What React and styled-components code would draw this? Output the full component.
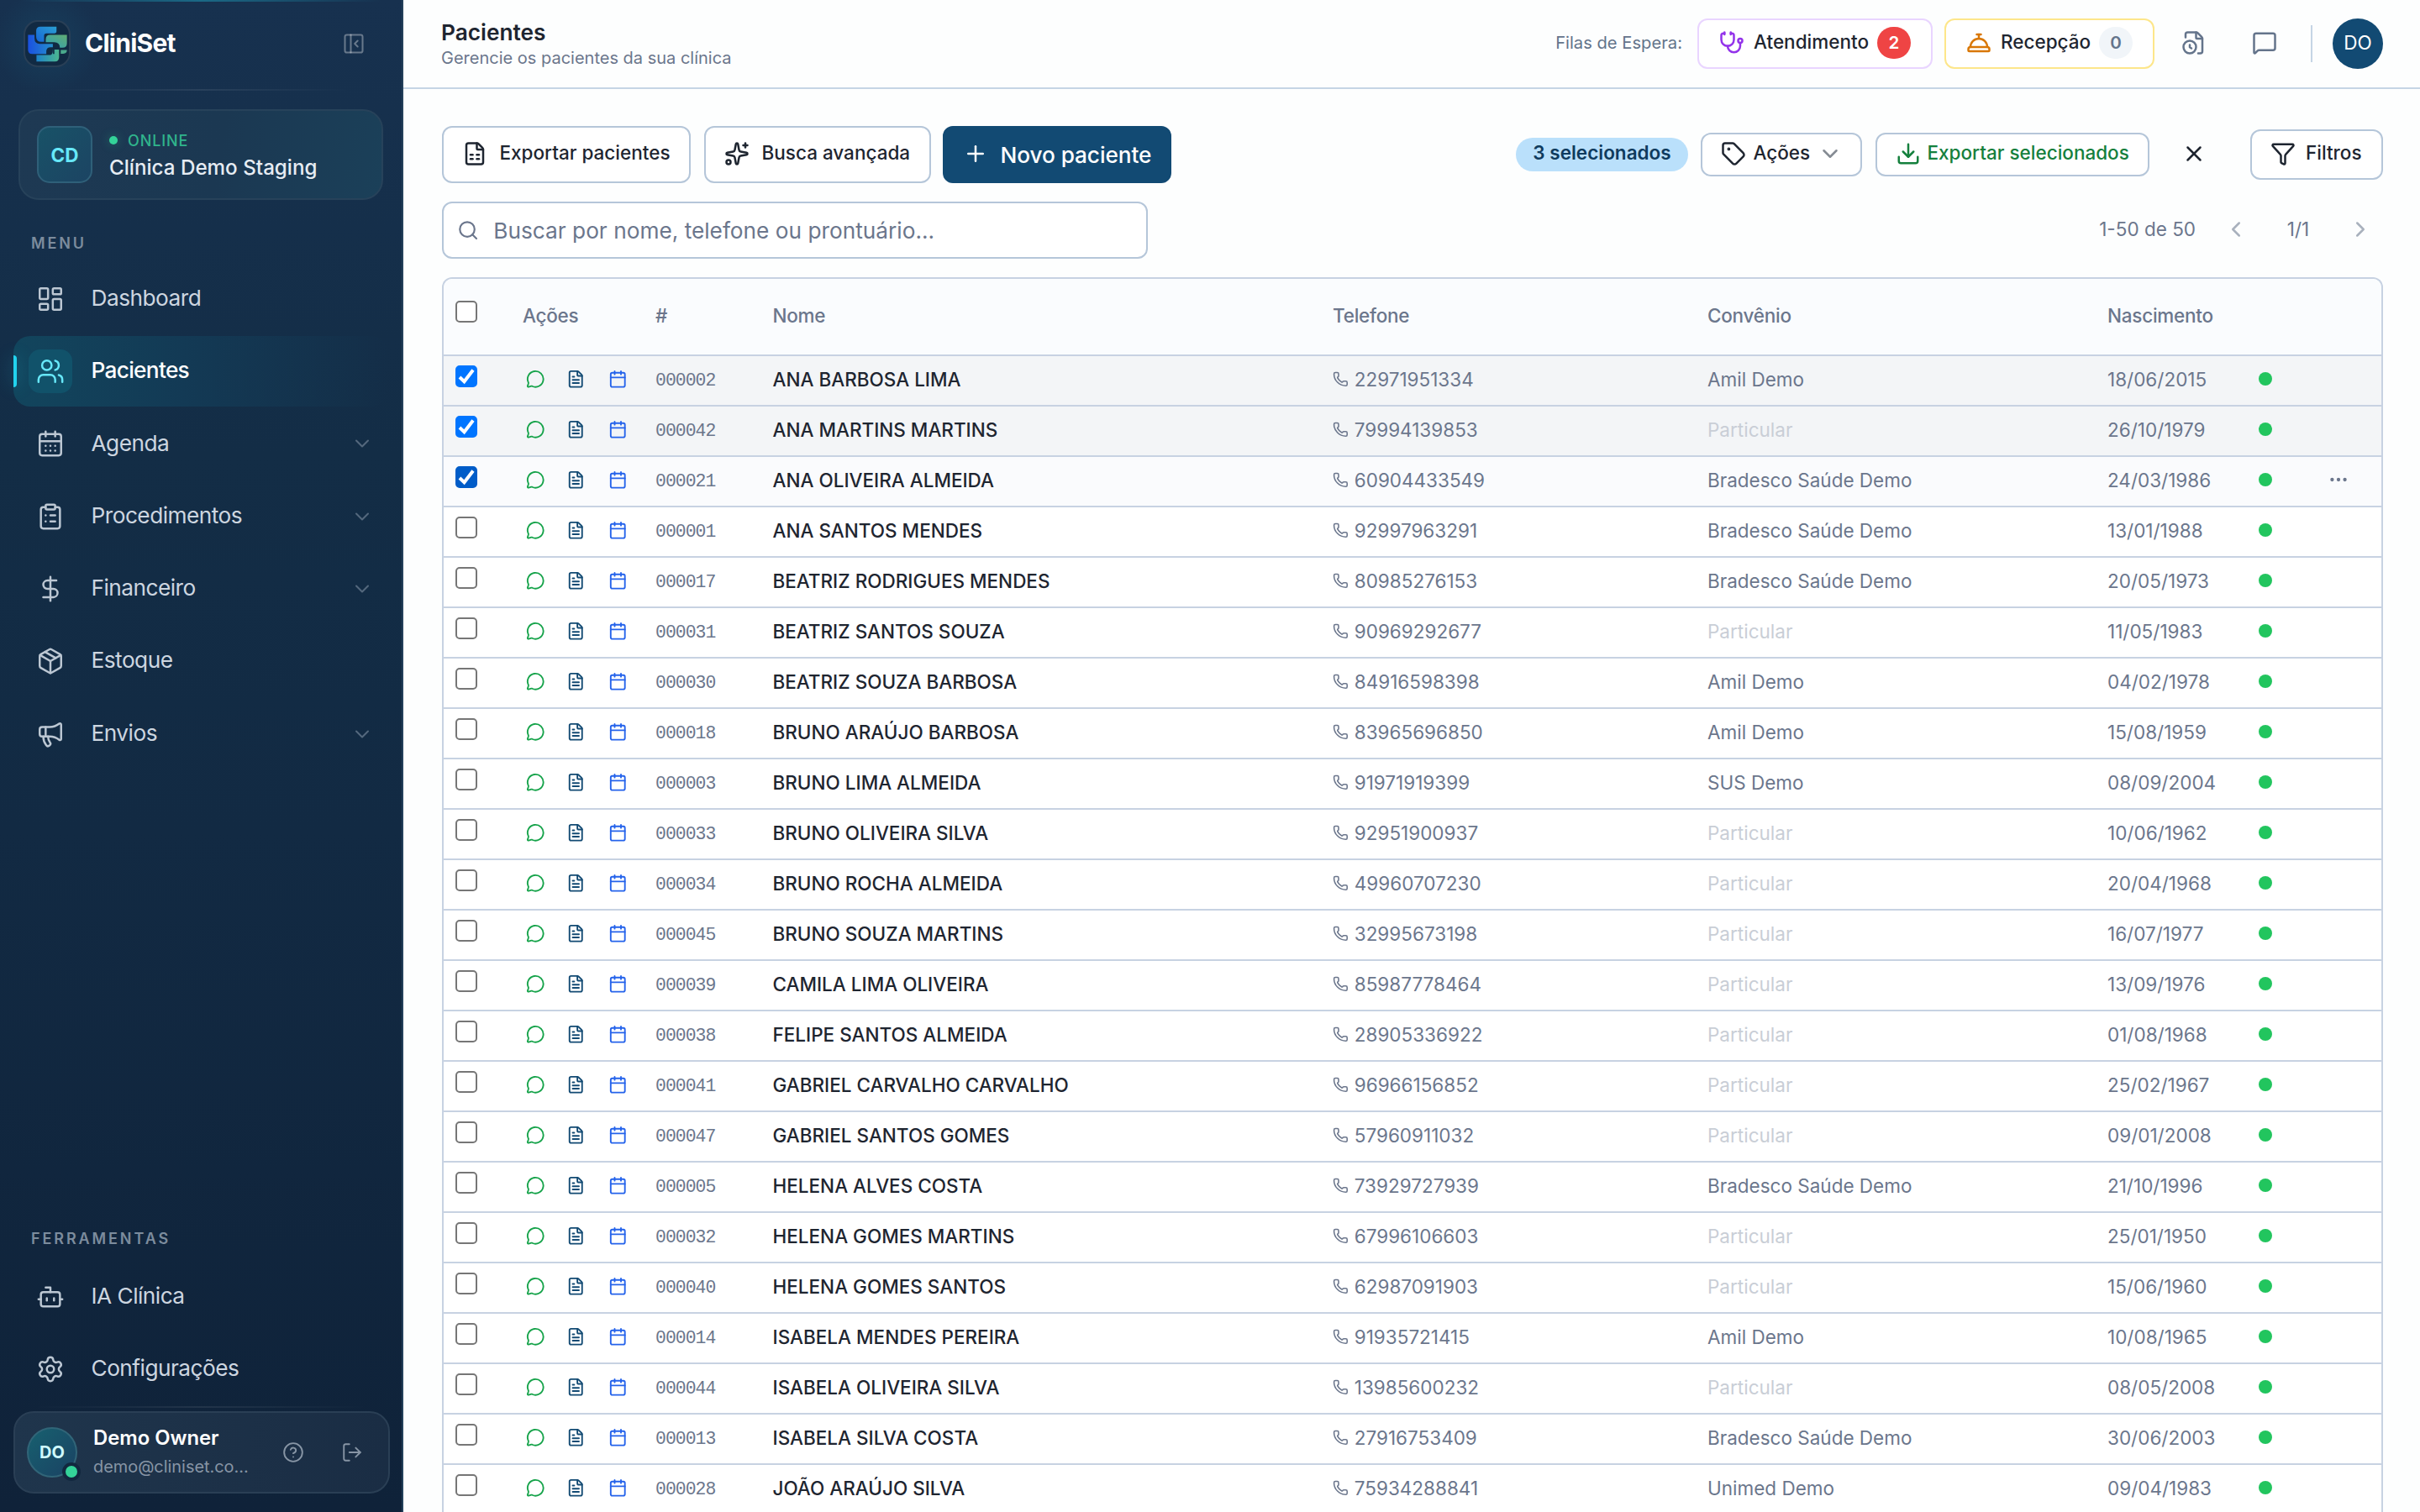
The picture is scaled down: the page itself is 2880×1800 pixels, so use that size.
import React from 'react';
import styled, { createGlobalStyle, css } from 'styled-components';
import {
  Bot,
  Calendar,
  CalendarDays,
  ChevronDown,
  ChevronLeft,
  ChevronRight,
  CircleQuestionMark,
  ClipboardList,
  ConciergeBell,
  DollarSign,
  Download,
  Ellipsis,
  FileClock,
  FileSpreadsheet,
  FileText,
  Funnel,
  LayoutDashboard,
  LogOut,
  Megaphone,
  MessageCircle,
  MessageSquare,
  Package,
  PanelLeftClose,
  Phone,
  Plus,
  Search,
  Settings,
  Sparkles,
  Stethoscope,
  Tag,
  Users,
  X,
} from 'lucide-react';

const GlobalStyle = createGlobalStyle`
  * {
    box-sizing: border-box;
  }

  body {
    margin: 0;
    overflow: hidden;
    font-family: Inter, "Liberation Sans", sans-serif;
    font-size: 22.5px;
    color: #1e2530;
    background-color: #fdfefe;
  }

  svg {
    flex-shrink: 0;
  }
`;

const Page = styled.div`
  display: flex;
  width: 2880px;
  height: 1800px;
  overflow: hidden;
`;

/* Sidebar */

const Sidebar = styled.aside`
  display: flex;
  flex-direction: column;
  flex-shrink: 0;
  width: 480px;
  height: 100%;
  background:
    linear-gradient(90deg, transparent 5%, rgba(34, 211, 238, 0.35) 50%, transparent 95%) top / 100% 2px no-repeat,
    radial-gradient(circle at 56px 50px, rgba(22, 90, 120, 0.32), transparent 62px),
    linear-gradient(180deg, #17314f 0%, #132d46 30%, #122a43 55%, #0f2239 100%);
  border-right: 2px solid #24405a;
`;

const Brand = styled.div`
  display: flex;
  align-items: center;
  height: 106px;
  padding: 0 43px 2px 28px;
`;

const LogoBox = styled.div`
  display: flex;
  align-items: center;
  justify-content: center;
  width: 56px;
  height: 56px;
  margin-right: 17px;
  background-color: #112a43;
  border: 2px solid rgba(255, 255, 255, 0.1);
  border-radius: 17px;
`;

const BrandName = styled.div`
  flex: 1;
  padding-bottom: 3px;
  font-size: 30px;
  font-weight: 700;
  letter-spacing: -0.75px;
  color: #ffffff;
`;

const Fade = styled.div`
  height: 2px;
  margin: ${props => props.$top || 0}px ${props => props.$inset}px 0;
  background: linear-gradient(90deg, transparent, rgba(255, 255, 255, 0.08), transparent);
`;

const ClinicCard = styled.div`
  display: flex;
  align-items: center;
  gap: 20px;
  height: 108px;
  margin: 22px 22px 0;
  padding: 0 20px;
  background: linear-gradient(100deg, #1e3953 0%, #1b3852 55%, #1b4059 100%);
  border: 2px solid #27425a;
  border-radius: 24px;
`;

const ClinicBadge = styled.div`
  display: flex;
  align-items: center;
  justify-content: center;
  width: 66px;
  height: 68px;
  background: linear-gradient(135deg, #185267, #1c4463);
  border: 2px solid #2f6079;
  border-radius: 15px;
  font-weight: 700;
  color: #67e8f9;
`;

const ClinicText = styled.div`
  padding-top: 6px;
`;

const Online = styled.div`
  display: flex;
  align-items: center;
  gap: 12px;
  margin-bottom: 3px;
  font-size: 18px;
  font-weight: 500;
  line-height: 22px;
  letter-spacing: 0.9px;
  color: #30b48c;
`;

const OnlineDot = styled.span`
  width: 10px;
  height: 10px;
  margin-top: -1px;
  border-radius: 50%;
  background-color: #34d399;
  box-shadow: 0 0 12px rgba(52, 211, 153, 0.35);
`;

const ClinicName = styled.div`
  font-size: 24.2px;
  font-weight: 500;
  line-height: 36px;
  color: #e6ecf3;
`;

const SectionLabel = styled.div`
  padding-left: 37px;
  font-size: 18px;
  font-weight: 600;
  line-height: 22px;
  letter-spacing: 2.9px;
  color: #7c8c9d;
`;

const MenuLabel = styled(SectionLabel)`
  margin-top: 41px;
`;

const Nav = styled.nav`
  display: flex;
  flex-direction: column;
  gap: 2px;
  margin: ${props => props.$top}px 0 0;
  padding: 0 16px;
`;

const NavIcon = styled.span`
  display: flex;
  align-items: center;
  justify-content: center;
  width: 52px;
  height: 52px;
  border-radius: 14px;
  color: #bcc7d3;
`;

const NavLabel = styled.span`
  flex: 1;
  margin-left: 22.5px;
  padding-bottom: 2.8px;
  font-size: 26.25px;
  letter-spacing: -0.52px;
`;

const NavItem = styled.a`
  display: flex;
  align-items: center;
  height: 84.3px;
  padding: 0 17px 0 18px;
  border-radius: 20px;
  color: #cdd6e0;

  & > svg {
    color: #54687d;
  }

  ${props => props.$active && css`
    background: linear-gradient(90deg, #12455d 0%, #133a55 45%, rgba(19, 48, 76, 0) 100%);
    color: #ffffff;

    &::before {
      content: '';
      width: 4px;
      height: 38px;
      margin: 0 14px 0 -18px;
      border-radius: 0 4px 4px 0;
      background-color: #22d3ee;
      box-shadow: 0 0 20px rgba(34, 211, 238, 0.4);
    }

    ${NavIcon} {
      background-color: #11526a;
      color: #67e8f9;
    }

    ${NavLabel} {
      font-weight: 500;
      letter-spacing: -0.7px;
    }
  `}
`;

const Spacer = styled.div`
  flex: 1;
`;

const UserCard = styled.div`
  display: flex;
  align-items: center;
  height: 98px;
  margin: 4px 14px 22px 16px;
  padding: 0 30px 0 14px;
  background: linear-gradient(90deg, #1f354c, #1a2d44);
  border: 2px solid #2a3f55;
  border-radius: 24px;
  color: #8795a5;
`;

const UserAvatar = styled.div`
  position: relative;
  display: flex;
  align-items: center;
  justify-content: center;
  width: 60px;
  height: 60px;
  margin-right: 19px;
  background: linear-gradient(135deg, #17606f, #1a4263);
  border: 2px solid #316578;
  border-radius: 50%;
  font-size: 20px;
  font-weight: 700;
  color: #cffafe;
`;

const Presence = styled.span`
  position: absolute;
  right: -6px;
  bottom: -6px;
  width: 22px;
  height: 22px;
  border: 4px solid #12283f;
  border-radius: 50%;
  background-color: #34d399;
`;

const UserText = styled.div`
  flex: 1;
  padding-bottom: 1px;
`;

const UserName = styled.div`
  font-size: 23.8px;
  font-weight: 600;
  line-height: 34px;
  color: #ffffff;
`;

const UserMail = styled.div`
  font-size: 19.9px;
  line-height: 34px;
`;

const UserActions = styled.div`
  display: flex;
  gap: 44px;
`;

/* Main area */

const Main = styled.main`
  display: flex;
  flex-direction: column;
  flex: 1;
  min-width: 0;
`;

const Header = styled.header`
  display: flex;
  align-items: center;
  justify-content: space-between;
  height: 106px;
  padding: 0 44px 0 45px;
  border-bottom: 2px solid #c5d5e5;
`;

const Title = styled.h1`
  margin: 0;
  padding-top: 1px;
  font-size: 26.25px;
  font-weight: 600;
  line-height: 33px;
`;

const Subtitle = styled.div`
  font-size: 20px;
  line-height: 28px;
  color: #6b768c;
`;

const HeaderRight = styled.div`
  display: flex;
  align-items: center;
  color: #64748b;
`;

const QueueLabel = styled.span`
  margin: 0 18px 3px 0;
  font-size: 20.2px;
`;

const Label = styled.span`
  padding-bottom: 3px;
  white-space: nowrap;
`;

const QueueButton = styled.button`
  display: flex;
  align-items: center;
  gap: 11px;
  width: ${props => props.$width}px;
  height: 60px;
  margin-right: 14px;
  padding: 0 24px 2px;
  background-color: #ffffff;
  border: 2px solid ${props => props.$border};
  border-radius: 12px;
  font: 500 22.5px Inter, sans-serif;
  color: #1e2530;

  & > svg {
    color: ${props => props.$icon};
  }
`;

const Count = styled.span`
  width: 40px;
  height: 38px;
  margin-left: -1px;
  border-radius: 19px;
  font-size: 20.6px;
  font-weight: 600;
  line-height: 38px;
  text-align: center;
  background-color: ${props => (props.$alert ? '#ef4444' : '#f1f5f9')};
  color: ${props => (props.$alert ? '#ffffff' : '#64748b')};
`;

const HeaderIcons = styled.div`
  display: flex;
  gap: 54px;
  margin: 0 40px 2px 18px;
`;

const Separator = styled.span`
  width: 2px;
  height: 44px;
  margin-right: 24px;
  background-color: #c5d5e5;
`;

const Avatar = styled.div`
  width: 60px;
  height: 60px;
  border-radius: 50%;
  background-color: #124a73;
  font-size: 22.5px;
  line-height: 57px;
  text-align: center;
  color: #ffffff;
`;

const Content = styled.section`
  display: flex;
  flex-direction: column;
  flex: 1;
  min-height: 0;
  padding: 44px 44px 0 46px;
`;

const Bar = styled.div`
  display: flex;
  align-items: center;
  justify-content: space-between;
  height: 68px;
  margin-bottom: 22px;
`;

const Group = styled.div`
  display: flex;
  align-items: center;
  gap: 16px;
`;

const Button = styled.button`
  display: flex;
  align-items: center;
  gap: ${props => props.$gap || 14.5}px;
  width: ${props => props.$width}px;
  height: ${props => props.$height}px;
  padding: 0 22px 2px;
  background-color: #ffffff;
  border: 2px solid #b5c6d9;
  border-radius: 12px;
  font: 500 22.5px Inter, sans-serif;
  color: ${props => props.$color || '#1e2530'};
`;

const PrimaryButton = styled(Button)`
  margin-left: -2px;
  background-color: #124a73;
  border-color: #124a73;
  font-size: 26.25px;
  letter-spacing: -0.1px;
  color: #ffffff;

  ${Label} {
    padding: 3px 0 0;
  }
`;

const SelectedPill = styled.span`
  width: 205px;
  height: 40px;
  margin-right: -1px;
  border-radius: 20px;
  background-color: #bae0fb;
  font-weight: 600;
  line-height: 36px;
  text-align: center;
  color: #0f3b5e;
`;

const ClearButton = styled.span`
  display: flex;
  align-items: center;
  justify-content: center;
  width: 60px;
  height: 60px;
  margin: 0 21px 0 7px;
  padding-bottom: 2px;
`;

const SearchField = styled.label`
  display: flex;
  align-items: center;
  gap: 17px;
  width: 840px;
  height: 68px;
  padding: 0 16px;
  background-color: #ffffff;
  border: 2px solid #b5c6d9;
  border-radius: 12px;
  font-size: 26.25px;
  color: #6b768c;
`;

const Pager = styled.div`
  display: flex;
  align-items: center;
  padding: 0 12px 2px 0;
  color: #6b768c;

  & > svg {
    color: #a9b1bd;
  }
`;

const PageRange = styled.span`
  margin-right: 33px;
  padding-bottom: 1px;
`;

const PageNumber = styled.span`
  width: 30px;
  margin: 0 44px;
  padding-bottom: 1px;
  text-align: center;
`;

const Table = styled.div`
  flex: 1;
  min-height: 0;
  overflow: hidden;
  border: 2px solid #c7d2e2;
  border-bottom: 0;
  border-radius: 12px 12px 0 0;
`;

const Row = styled.div`
  display: grid;
  grid-template-columns: 80px 158px 139.5px 666.5px 446px 476px 180px 1fr;
  align-items: center;
  height: 60px;
  padding-left: 14px;
  border-bottom: 2px solid #c7d2e2;
  background-color: ${props => ({ selected: '#f3f5f7', hovered: '#fafbfd' }[props.$state] || '#ffffff')};
  color: #6b768c;
`;

const HeadRow = styled(Row)`
  height: 92px;
  background-color: #fafcfe;
  font-weight: 500;
  letter-spacing: -0.25px;
`;

const CheckBox = styled.span`
  display: block;
  width: 26px;
  height: 26px;
  margin-bottom: ${props => props.$lift}px;
  border: 2px solid ${props => props.$fill || '#767676'};
  border-radius: 5px;
  background-color: ${props => props.$fill || '#ffffff'};

  & > svg {
    display: block;
    margin: -2px;
  }
`;

const Cell = styled.div`
  display: flex;
  align-items: center;
  padding-bottom: 2.6px;
  white-space: nowrap;
`;

const ActionsCell = styled(Cell)`
  gap: 25.8px;
  padding-left: 4px;

  & > svg:nth-child(1) {
    color: #16a34a;
  }

  & > svg:nth-child(2) {
    color: #124a73;
  }

  & > svg:nth-child(3) {
    margin-left: 1px;
    color: #2563eb;
  }
`;

const CodeCell = styled(Cell)`
  padding-bottom: 0;
  font-family: "Liberation Mono", monospace;
  font-size: 21.4px;
  letter-spacing: -0.95px;
`;

const NameCell = styled(Cell)`
  font-weight: 500;
  color: #1e2530;
`;

const PhoneCell = styled(Cell)`
  gap: 7px;
`;

const PlanCell = styled(Cell)`
  color: ${props => (props.$muted ? '#c9ced6' : 'inherit')};
`;

const Status = styled.span`
  width: 16px;
  height: 16px;
  margin-bottom: 1px;
  border-radius: 50%;
  background-color: #22c55e;
`;

const MoreCell = styled(Cell)`
  padding: 0 0 2px 66px;
`;

const menu = [
  { label: 'Dashboard', icon: LayoutDashboard },
  { label: 'Pacientes', icon: Users, active: true },
  { label: 'Agenda', icon: CalendarDays, expandable: true },
  { label: 'Procedimentos', icon: ClipboardList, expandable: true },
  { label: 'Financeiro', icon: DollarSign, expandable: true },
  { label: 'Estoque', icon: Package },
  { label: 'Envios', icon: Megaphone, expandable: true },
];

const tools = [
  { label: 'IA Clínica', icon: Bot },
  { label: 'Configurações', icon: Settings },
];

// code, name, phone, plan, birth date, row state
const patients = [
  ['000002', 'ANA BARBOSA LIMA', '22971951334', 'Amil Demo', '18/06/2015', 'selected'],
  ['000042', 'ANA MARTINS MARTINS', '79994139853', 'Particular', '26/10/1979', 'selected'],
  ['000021', 'ANA OLIVEIRA ALMEIDA', '60904433549', 'Bradesco Saúde Demo', '24/03/1986', 'hovered'],
  ['000001', 'ANA SANTOS MENDES', '92997963291', 'Bradesco Saúde Demo', '13/01/1988'],
  ['000017', 'BEATRIZ RODRIGUES MENDES', '80985276153', 'Bradesco Saúde Demo', '20/05/1973'],
  ['000031', 'BEATRIZ SANTOS SOUZA', '90969292677', 'Particular', '11/05/1983'],
  ['000030', 'BEATRIZ SOUZA BARBOSA', '84916598398', 'Amil Demo', '04/02/1978'],
  ['000018', 'BRUNO ARAÚJO BARBOSA', '83965696850', 'Amil Demo', '15/08/1959'],
  ['000003', 'BRUNO LIMA ALMEIDA', '91971919399', 'SUS Demo', '08/09/2004'],
  ['000033', 'BRUNO OLIVEIRA SILVA', '92951900937', 'Particular', '10/06/1962'],
  ['000034', 'BRUNO ROCHA ALMEIDA', '49960707230', 'Particular', '20/04/1968'],
  ['000045', 'BRUNO SOUZA MARTINS', '32995673198', 'Particular', '16/07/1977'],
  ['000039', 'CAMILA LIMA OLIVEIRA', '85987778464', 'Particular', '13/09/1976'],
  ['000038', 'FELIPE SANTOS ALMEIDA', '28905336922', 'Particular', '01/08/1968'],
  ['000041', 'GABRIEL CARVALHO CARVALHO', '96966156852', 'Particular', '25/02/1967'],
  ['000047', 'GABRIEL SANTOS GOMES', '57960911032', 'Particular', '09/01/2008'],
  ['000005', 'HELENA ALVES COSTA', '73929727939', 'Bradesco Saúde Demo', '21/10/1996'],
  ['000032', 'HELENA GOMES MARTINS', '67996106603', 'Particular', '25/01/1950'],
  ['000040', 'HELENA GOMES SANTOS', '62987091903', 'Particular', '15/06/1960'],
  ['000014', 'ISABELA MENDES PEREIRA', '91935721415', 'Amil Demo', '10/08/1965'],
  ['000044', 'ISABELA OLIVEIRA SILVA', '13985600232', 'Particular', '08/05/2008'],
  ['000013', 'ISABELA SILVA COSTA', '27916753409', 'Bradesco Saúde Demo', '30/06/2003'],
  ['000028', 'JOÃO ARAÚJO SILVA', '75934288841', 'Unimed Demo', '09/04/1983'],
];

const checkFill = { selected: '#0075ff', hovered: '#005cc8' };

const Logo = () => (
  <svg width="47" height="43" viewBox="98 91 140 128">
    <defs>
      <linearGradient id="logoBlue" x1="0" y1="1" x2="1" y2="0">
        <stop offset="0" stopColor="#1666d8" />
        <stop offset="1" stopColor="#2b9fd0" />
      </linearGradient>
      <linearGradient id="logoDeep" x1="0" y1="0" x2="1" y2="0">
        <stop offset="0" stopColor="#1a50e0" />
        <stop offset="1" stopColor="#2590cc" />
      </linearGradient>
      <linearGradient id="logoGreen" x1="0" y1="1" x2="1" y2="0">
        <stop offset="0" stopColor="#2d9fb8" />
        <stop offset="1" stopColor="#62ad72" />
      </linearGradient>
      <linearGradient id="logoTeal" x1="0" y1="0" x2="1" y2="0">
        <stop offset="0" stopColor="#1d83c8" />
        <stop offset="1" stopColor="#4cb590" />
      </linearGradient>
    </defs>
    <path fill="url(#logoBlue)" d="M200 93v16q0 8-8 8h-28q-8 0-8 8v22h-10q-18 0-18-18v-21q0-15 15-15z" />
    <path fill="url(#logoDeep)" d="M99 122h23v13q0 19 19 19h46v12h-8q-15 0-15 15v9h-50q-15 0-15-15z" />
    <path fill="url(#logoGreen)" d="M237 122v30q0 16-16 16h-9q0-20-20-20h-30v-10q0-16 16-16z" />
    <path fill="url(#logoTeal)" d="M129 194h44q14 0 14-14v-6h22v28q0 15-15 15h-65z" />
    <path fill="#4aa98c" d="M215 176h22q0 13-13 13h-9z" />
    <path fill="none" stroke="#112a43" strokeWidth="5" d="M168 190v-10q0-9 9-9h60M190 152v38" />
  </svg>
);

const Check = () => (
  <svg width="26" height="26" viewBox="0 0 26 26" fill="none" stroke="#ffffff" strokeWidth="4">
    <path d="M5 14l5.5 5.3L21 5.5" />
  </svg>
);

const NavLinks = ({ items, top }) => (
  <Nav $top={top}>
    {items.map(({ label, icon: Icon, active, expandable }) => (
      <NavItem key={label} $active={active}>
        <NavIcon>
          <Icon size={34} strokeWidth={1.75} />
        </NavIcon>
        <NavLabel>{label}</NavLabel>
        {expandable && <ChevronDown size={28} strokeWidth={1.75} />}
      </NavItem>
    ))}
  </Nav>
);

const PatientRow = ({ patient }) => {
  const [code, name, phone, plan, birth, state] = patient;
  return (
    <Row $state={state}>
      <CheckBox $lift={10} $fill={checkFill[state]}>
        {state && <Check />}
      </CheckBox>
      <ActionsCell>
        <MessageCircle size={22.5} />
        <FileText size={22.5} />
        <Calendar size={22.5} />
      </ActionsCell>
      <CodeCell>{code}</CodeCell>
      <NameCell>{name}</NameCell>
      <PhoneCell>
        <Phone size={18.75} />
        {phone}
      </PhoneCell>
      <PlanCell $muted={plan === 'Particular'}>{plan}</PlanCell>
      <Cell>{birth}</Cell>
      <Cell>
        <Status />
        {state === 'hovered' && (
          <MoreCell>
            <Ellipsis size={26} />
          </MoreCell>
        )}
      </Cell>
    </Row>
  );
};

const App = () => (
  <Page>
    <GlobalStyle />
    <Sidebar>
      <Brand>
        <LogoBox>
          <Logo />
        </LogoBox>
        <BrandName>CliniSet</BrandName>
        <PanelLeftClose size={28} strokeWidth={1.75} color="rgba(255, 255, 255, 0.35)" />
      </Brand>
      <Fade $inset={60} />
      <ClinicCard>
        <ClinicBadge>CD</ClinicBadge>
        <ClinicText>
          <Online>
            <OnlineDot />
            ONLINE
          </Online>
          <ClinicName>Clínica Demo Staging</ClinicName>
        </ClinicText>
      </ClinicCard>
      <MenuLabel>MENU</MenuLabel>
      <NavLinks items={menu} top={12.7} />
      <Spacer />
      <SectionLabel>FERRAMENTAS</SectionLabel>
      <NavLinks items={tools} top={15} />
      <Fade $inset={40} $top={2} />
      <UserCard>
        <UserAvatar>
          DO
          <Presence />
        </UserAvatar>
        <UserText>
          <UserName>Demo Owner</UserName>
          <UserMail>demo@cliniset.co...</UserMail>
        </UserText>
        <UserActions>
          <CircleQuestionMark size={26} strokeWidth={1.75} />
          <LogOut size={26} strokeWidth={1.75} />
        </UserActions>
      </UserCard>
    </Sidebar>
    <Main>
      <Header>
        <div>
          <Title>Pacientes</Title>
          <Subtitle>Gerencie os pacientes da sua clínica</Subtitle>
        </div>
        <HeaderRight>
          <QueueLabel>Filas de Espera:</QueueLabel>
          <QueueButton $width={280} $border="#e9d5ff" $icon="#9333ea">
            <Stethoscope size={30} />
            <Label>Atendimento</Label>
            <Count $alert>2</Count>
          </QueueButton>
          <QueueButton $width={250} $border="#fde68a" $icon="#d97706">
            <ConciergeBell size={30} />
            <Label>Recepção</Label>
            <Count>0</Count>
          </QueueButton>
          <HeaderIcons>
            <FileClock size={30} />
            <MessageSquare size={30} />
          </HeaderIcons>
          <Separator />
          <Avatar>DO</Avatar>
        </HeaderRight>
      </Header>
      <Content>
        <Bar>
          <Group>
            <Button $width={296} $height={68}>
              <FileSpreadsheet size={30} />
              <Label>Exportar pacientes</Label>
            </Button>
            <Button $width={270} $height={68}>
              <Sparkles size={30} />
              <Label>Busca avançada</Label>
            </Button>
            <PrimaryButton $width={272} $height={68}>
              <Plus size={30} />
              <Label>Novo paciente</Label>
            </PrimaryButton>
          </Group>
          <Group>
            <SelectedPill>3 selecionados</SelectedPill>
            <Button $width={192} $height={52} $gap={8.5}>
              <Tag size={30} />
              <Label>Ações</Label>
              <ChevronDown size={30} color="#858b93" />
            </Button>
            <Button $width={326} $height={52} $gap={7.5} $color="#15803d">
              <Download size={30} />
              <Label>Exportar selecionados</Label>
            </Button>
            <ClearButton>
              <X size={30} />
            </ClearButton>
            <Button $width={158} $height={60} $gap={12}>
              <Funnel size={30} />
              <Label>Filtros</Label>
            </Button>
          </Group>
        </Bar>
        <Bar>
          <SearchField>
            <Search size={26.25} />
            Buscar por nome, telefone ou prontuário...
          </SearchField>
          <Pager>
            <PageRange>1-50 de 50</PageRange>
            <ChevronLeft size={30} />
            <PageNumber>1/1</PageNumber>
            <ChevronRight size={30} />
          </Pager>
        </Bar>
        <Table>
          <HeadRow>
            <CheckBox $lift={12} />
            <Cell>Ações</Cell>
            <Cell>#</Cell>
            <Cell>Nome</Cell>
            <Cell>Telefone</Cell>
            <Cell>Convênio</Cell>
            <Cell>Nascimento</Cell>
          </HeadRow>
          {patients.map(patient => (
            <PatientRow key={patient[0]} patient={patient} />
          ))}
        </Table>
      </Content>
    </Main>
  </Page>
);

export default App;
